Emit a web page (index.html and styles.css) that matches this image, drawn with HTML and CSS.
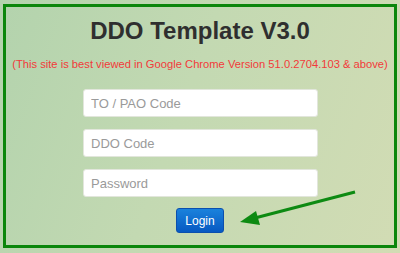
FILE: index.html
```html
<!DOCTYPE html>
<html>
<head>
  <meta charset="UTF-8">
  <title>DDO Template</title>
  <link rel="stylesheet" href="styles.css">
</head>
<body>
  <div class="page">
    <div class="box">
      <h1 class="title">DDO Template V3.0</h1>
      <p class="notice">(This site is best viewed in Google Chrome Version 51.0.2704.103 &amp; above)</p>

      <div class="login-form">
        <input type="text" class="field" placeholder="TO / PAO Code">
        <input type="text" class="field" placeholder="DDO Code">
        <input type="password" class="field" placeholder="Password">
        <button class="login-btn">Login</button>
      </div>

      <!-- flecha que apunta al boton -->
      <svg class="arrow" width="130" height="40" viewBox="0 0 130 40">
        <line x1="118" y1="4" x2="14" y2="31" stroke="#0d8a12" stroke-width="3"/>
        <polygon points="3,34 19,23 23,37" fill="#0d8a12"/>
      </svg>
    </div>
  </div>
</body>
</html>
```

FILE: styles.css
```css
/* Estilos generales */
html, body {
  margin: 0;
  height: 100%;
}

body {
  font-family: "Liberation Sans", Arial, sans-serif;
  background: linear-gradient(110deg, #b3d3ad 0%, #c3d9b2 45%, #d2dcb4 100%);
}

.page {
  padding: 4px 3px 5px 3px;
}

.box {
  position: relative;
  height: 238px;
  border: 3px solid #0b860b;
  text-align: center;
}

.title {
  margin: 9px 0 0 0;
  font-size: 24px;
  line-height: 30px;
  font-weight: bold;
  color: #2f2f2f;
}

.notice {
  margin: 11px 0 0 0;
  font-size: 11.2px;
  line-height: 14px;
  white-space: nowrap;
  color: #f23a3a;
}

/* Formulario */
.login-form {
  display: flex;
  flex-direction: column;
  align-items: center;
  gap: 12px;
  margin-top: 18px;
}

.field {
  box-sizing: border-box;
  width: 235px;
  height: 28px;
  margin-left: 1px;
  padding: 4px 7px;
  border: 1px solid #e2e6dc;
  border-radius: 3px;
  background: #fff;
  font-family: "Liberation Sans", Arial, sans-serif;
  font-size: 13px;
  color: #555;
}

.field::placeholder {
  color: #9a9a9a;
}

.login-btn {
  margin-top: -1px;
  width: 48px;
  height: 25px;
  padding: 0;
  border: 1px solid #0b4fae;
  border-radius: 3px;
  background: linear-gradient(#1a82dc, #0759c2);
  color: #fff;
  font-family: "Liberation Sans", Arial, sans-serif;
  font-size: 12px;
}

.arrow {
  position: absolute;
  left: 231px;
  top: 181px;
}
```
